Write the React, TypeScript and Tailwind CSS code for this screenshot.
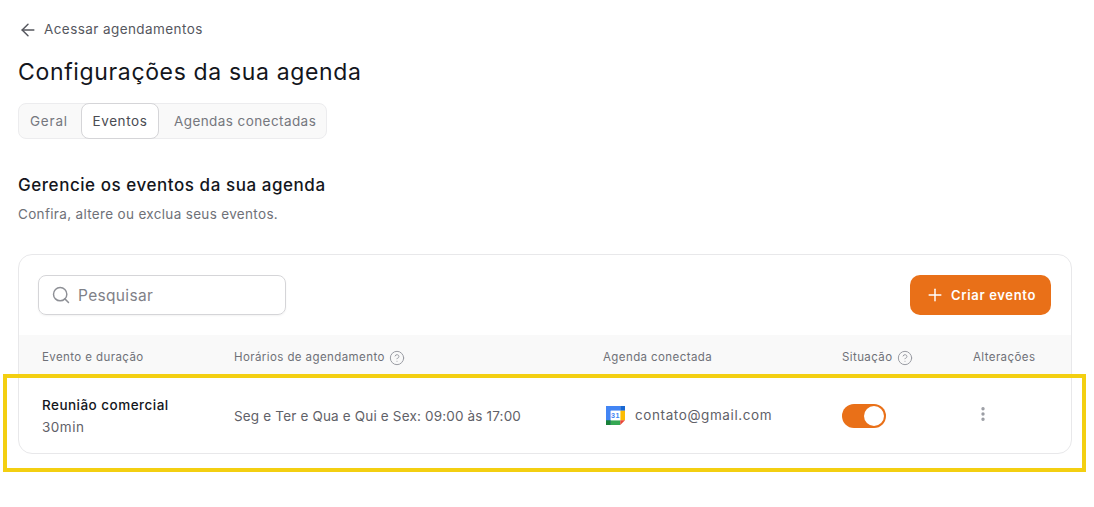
import { ArrowLeft, CircleHelp, MoreVertical, Plus, Search } from 'lucide-react'

function GoogleCalendarIcon() {
  return (
    <svg viewBox="0 0 20 20" className="h-[19px] w-[19px] shrink-0">
      <rect x="0" y="0" width="15" height="5" fill="#4285f4" />
      <rect x="0" y="0" width="5" height="20" fill="#4285f4" />
      <rect x="15" y="0" width="5" height="5" fill="#1967d2" />
      <rect x="15" y="5" width="5" height="10" fill="#fbbc04" />
      <rect x="5" y="15" width="10" height="5" fill="#34a853" />
      <rect x="0" y="15" width="5" height="5" fill="#188038" />
      <path d="M15 15h5l-5 5z" fill="#ea4335" />
      <rect x="5" y="5" width="10" height="10" fill="#fff" />
      <text x="10" y="13" textAnchor="middle" fontSize="7.5" fontWeight="700" fill="#4285f4" fontFamily="'Liberation Sans', sans-serif">31</text>
    </svg>
  )
}

function HeaderCell({ label, help }: { label: string; help?: boolean }) {
  return (
    <div className="flex items-center gap-[4px] text-[11.5px] tracking-[0.41px] text-[#6f7178]">
      <span>{label}</span>
      {help && <CircleHelp className="h-[16px] w-[16px] text-[#9a9ca3]" strokeWidth={1.5} />}
    </div>
  )
}

export default function App() {
  return (
    <div className="relative min-h-[507px] bg-white pl-[18px] pr-[22px] pt-[20px] font-['Inter',sans-serif]">
      <div className="flex h-[19px] items-center gap-[6px] text-[13.5px] tracking-[0.42px] text-[#55575e]">
        <ArrowLeft className="h-[20px] w-[20px]" strokeWidth={1.75} />
        <span>Acessar agendamentos</span>
      </div>

      <h1 className="mt-[17px] text-[23px] font-normal leading-[32px] tracking-[0.65px] text-[#14161c]">
        Configurações da sua agenda
      </h1>

      <div className="mt-[15px] flex h-[36px] w-[309px] items-center whitespace-nowrap rounded-[8px] border border-[#ececee] bg-[#f9f9f9] text-[13.5px] tracking-[0.42px] text-[#75777e]">
        <div className="w-[62px] pl-[11px] tracking-[0.8px]">Geral</div>
        <div className="flex h-[36px] w-[78px] items-center justify-center rounded-[8px] border border-[#d5d5d8] bg-white tracking-[0.6px] text-[#4a4c53]">
          Eventos
        </div>
        <div className="pl-[15px]">Agendas conectadas</div>
      </div>

      <h2 className="mt-[34px] text-[17px] font-medium leading-[24px] tracking-[0.55px] text-[#14161c]">
        Gerencie os eventos da sua agenda
      </h2>
      <p className="mt-[8px] text-[13.5px] leading-[18px] tracking-[0.33px] text-[#6f7178]">Confira, altere ou exclua seus eventos.</p>

      <div className="mt-[31px] h-[200px] overflow-hidden rounded-[14px] border border-[#e8e8ea] bg-white">
        <div className="flex h-[80px] items-center justify-between pl-[19px] pr-[20px]">
          <div className="flex h-[40px] w-[248px] items-center gap-[7px] rounded-[8px] border border-[#d5d5d8] pl-[12px] text-[15.5px] tracking-[0.33px] text-[#7f8188] shadow-[0_1px_2px_rgba(0,0,0,0.05)]">
            <Search className="h-[20px] w-[20px] text-[#8e9096]" strokeWidth={1.75} />
            <span className="pt-[1px]">Pesquisar</span>
          </div>
          <button
            type="button"
            className="flex h-[40px] w-[141px] items-center justify-center gap-[6px] rounded-[10px] bg-[#e97018] text-[13px] font-semibold tracking-[0.66px] text-white"
          >
            <Plus className="h-[20px] w-[20px]" strokeWidth={1.75} />
            <span className="pt-[1px]">Criar evento</span>
          </button>
        </div>

        <div className="grid h-[43px] grid-cols-[192px_369px_239px_131px_1fr] items-center bg-[#f9f9f9] pl-[23px] pt-[2px]">
          <HeaderCell label="Evento e duração" />
          <HeaderCell label="Horários de agendamento" help />
          <HeaderCell label="Agenda conectada" />
          <HeaderCell label="Situação" help />
          <HeaderCell label="Alterações" />
        </div>

        <div className="grid h-[75px] grid-cols-[192px_369px_239px_131px_1fr] items-center pl-[23px]">
          <div className="pt-[1px]">
            <div className="text-[13.5px] font-medium leading-[20px] tracking-[0.47px] text-[#14161c]">Reunião comercial</div>
            <div className="mt-[2px] text-[13.5px] leading-[20px] tracking-[0.5px] text-[#5f6168]">30min</div>
          </div>
          <div className="pt-[2px] text-[13.5px] tracking-[0.17px] text-[#5f6168]">Seg e Ter e Qua e Qui e Sex: 09:00 às 17:00</div>
          <div className="flex items-center gap-[10px] pl-[3px] text-[13.5px] tracking-[0.6px] text-[#5f6168]">
            <GoogleCalendarIcon />
            <span>contato@gmail.com</span>
          </div>
          <div className="flex h-[24px] w-[44px] items-center justify-end rounded-full bg-[#e97018] pr-[2px]">
            <div className="h-[20px] w-[20px] rounded-full bg-white" />
          </div>
          <MoreVertical className="mb-[4px] ml-[1px] h-[18px] w-[18px] text-[#9a9ca3]" strokeWidth={2.5} />
        </div>
      </div>

      <div className="absolute left-[3px] top-[374px] h-[98px] w-[1083px] border-[4px] border-[#f3cf11]" />
    </div>
  )
}
